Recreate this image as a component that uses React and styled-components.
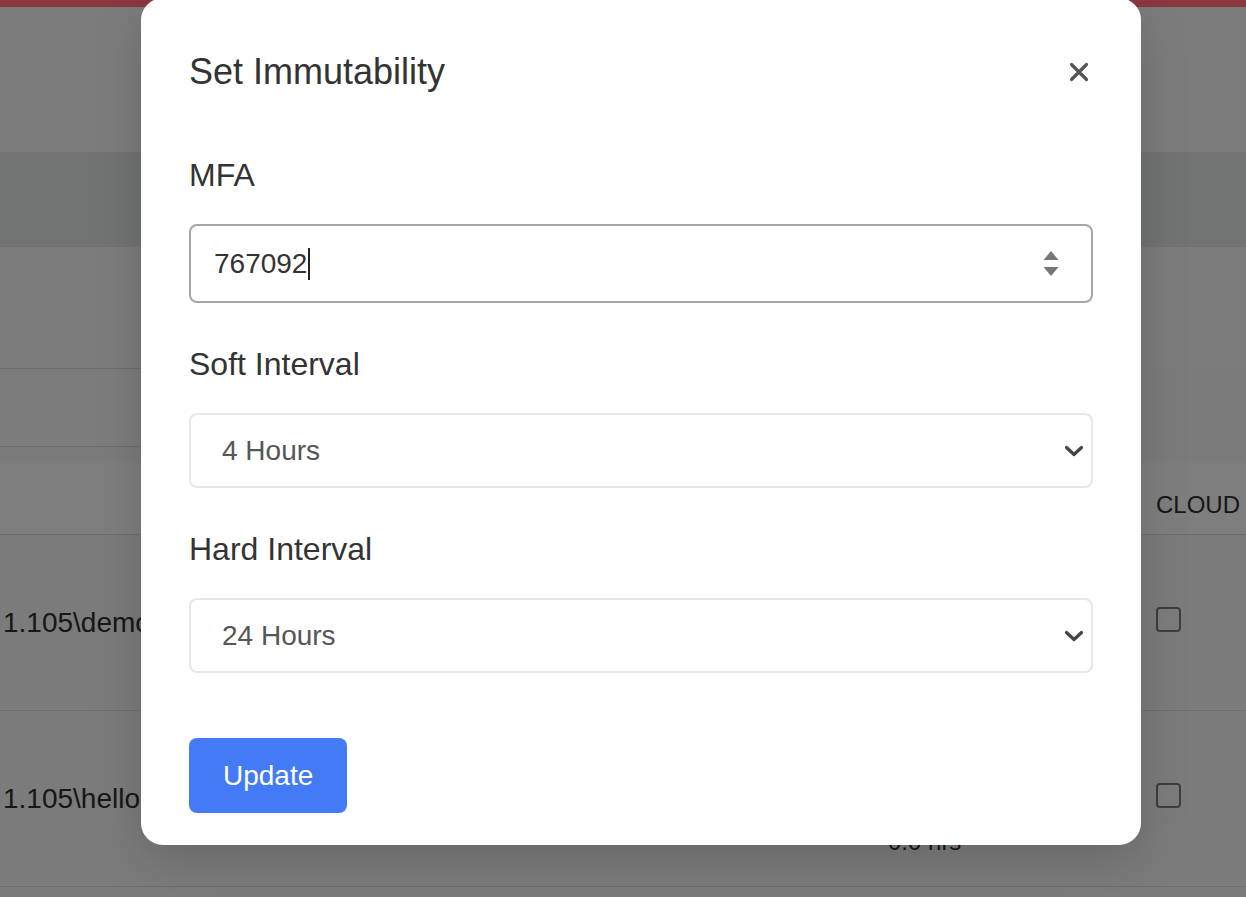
import React from "react";
import styled, { createGlobalStyle } from "styled-components";

const GlobalStyle = createGlobalStyle`
  html, body { margin: 0; padding: 0; }
  body {
    font-family: "Liberation Sans", Arial, sans-serif;
    overflow: hidden;
    background: #dfdfdf;
  }
  * { box-sizing: border-box; }
`;

const Page = styled.div`
  position: relative;
  width: 1246px;
  height: 897px;
  overflow: hidden;
  background: #e0e0e2;
  display: flex;
  flex-direction: column;
  color: #333;
`;

const TopBar = styled.div`
  height: 7px;
  flex: none;
  background: #fe6674;
`;

const Band = styled.div`
  flex: none;
  height: ${(p) => p.$h}px;
  background: ${(p) => p.$bg || "#e2e2e4"};
`;

const FilterRow = styled.div`
  flex: none;
  height: 79px;
  display: flex;
`;

const FilterBox = styled.div`
  width: 420px;
  margin-left: -2px;
  border: 1px solid #c6c6c6;
  border-radius: 0 4px 4px 0;
  background: #e2e2e4;
`;

const Table = styled.div`
  margin-top: 16px;
  display: grid;
  grid-template-columns: 888px 268px 1fr;
`;

const HeadCell = styled.div`
  height: 72px;
  background: #e6e6e6;
  border-bottom: 1px solid #c6c6c6;
  display: flex;
  align-items: center;
  padding-top: 12px;
  padding-left: ${(p) => p.$pl || 0}px;
  font-size: 24px;
  color: #2a2a2a;
  text-transform: uppercase;
`;

const Cell = styled.div`
  height: 176px;
  border-bottom: 1px solid #c6c6c6;
  display: flex;
  flex-direction: column;
  justify-content: ${(p) => (p.$end ? "flex-end" : "center")};
  padding-left: ${(p) => p.$pl || 0}px;
  padding-bottom: ${(p) => (p.$end ? 28 : 0)}px;
  font-size: ${(p) => p.$fs || 24}px;
  line-height: 32px;
  color: #2a2a2a;
  white-space: nowrap;
`;

const Checkbox = styled.span`
  display: block;
  width: 25px;
  height: 25px;
  margin-top: -6px;
  border: 2px solid #707070;
  border-radius: 4px;
  background: #e2e2e2;
`;

const Backdrop = styled.div`
  position: absolute;
  inset: 0;
  background: rgba(0, 0, 0, 0.45);
`;

const Modal = styled.div`
  position: absolute;
  left: 141px;
  top: -2px;
  width: 1000px;
  background: #fff;
  border-radius: 22px;
  padding: 52px 48px 32px;
  box-shadow: 0 14px 50px rgba(0, 0, 0, 0.16);
  display: flex;
  flex-direction: column;
  align-items: stretch;
`;

const Header = styled.div`
  display: flex;
  align-items: center;
  justify-content: space-between;
  height: 43px;
  margin-bottom: 63px;
`;

const Title = styled.h2`
  margin: 0;
  font-size: 36px;
  line-height: 43px;
  font-weight: 400;
  color: #333;
`;

const CloseButton = styled.button`
  border: 0;
  background: none;
  padding: 0;
  margin-right: 4px;
  width: 20px;
  height: 20px;
  display: flex;
  cursor: pointer;
`;

const Field = styled.div`
  display: flex;
  flex-direction: column;
  & + & {
    margin-top: 42px;
  }
`;

const Label = styled.label`
  font-size: 32px;
  line-height: 38px;
  color: #333;
  margin-bottom: 30px;
`;

const NumberField = styled.div`
  height: 79px;
  border: 2px solid #a6a6a6;
  border-radius: 8px;
  display: flex;
  align-items: center;
  padding: 0 32px 0 23px;
  font-size: 28px;
  color: #333;
`;

const Caret = styled.span`
  display: inline-block;
  width: 1.5px;
  height: 32px;
  margin-left: 1px;
  background: #222;
`;

const Spinner = styled.svg`
  margin-left: auto;
  flex: none;
`;

const SelectBox = styled.div`
  height: 75px;
  border: 2px solid #e7e7e7;
  border-radius: 8px;
  display: flex;
  align-items: center;
  padding: 0 7px 0 31px;
  font-size: 28px;
  color: #565656;
`;

const Chevron = styled.svg`
  margin-left: auto;
  flex: none;
`;

const UpdateButton = styled.button`
  align-self: flex-start;
  margin-top: 65px;
  height: 75px;
  padding: 0 34px;
  border: 0;
  border-radius: 8px;
  background: #437af5;
  color: #fff;
  font-family: "Liberation Sans", Arial, sans-serif;
  font-size: 28px;
  cursor: pointer;
`;

const Select = ({ value }) => (
  <SelectBox>
    <span>{value}</span>
    <Chevron width="20" height="12" viewBox="0 0 20 12">
      <polyline
        points="2.5,2.5 10,9.5 17.5,2.5"
        fill="none"
        stroke="#444"
        strokeWidth="3.2"
        strokeLinecap="round"
        strokeLinejoin="round"
      />
    </Chevron>
  </SelectBox>
);

export default function App() {
  return (
    <>
      <GlobalStyle />
      <Page>
        <TopBar />
        <Band $h={145} />
        <Band $h={95} $bg="#cfd2d2" />
        <Band $h={121} />
        <FilterRow>
          <FilterBox />
        </FilterRow>
        <Table>
          <HeadCell $pl={200}>Path</HeadCell>
          <HeadCell>Immutability</HeadCell>
          <HeadCell>Cloud</HeadCell>

          <Cell $pl={3} $fs={28}>1.105\demo</Cell>
          <Cell>
            <span>4.0 hrs</span>
            <span>24.0 hrs</span>
          </Cell>
          <Cell>
            <Checkbox />
          </Cell>

          <Cell $pl={3} $fs={28}>1.105\hello</Cell>
          <Cell $end>
            <span>4.0 hrs</span>
            <span>0.0 hrs</span>
          </Cell>
          <Cell>
            <Checkbox />
          </Cell>
        </Table>

        <Backdrop />

        <Modal role="dialog" aria-label="Set Immutability">
          <Header>
            <Title>Set Immutability</Title>
            <CloseButton aria-label="Close">
              <svg width="20" height="20" viewBox="0 0 20 20">
                <path
                  d="M2.5 2.5 L17.5 17.5 M17.5 2.5 L2.5 17.5"
                  stroke="#555"
                  strokeWidth="3.2"
                  strokeLinecap="round"
                />
              </svg>
            </CloseButton>
          </Header>

          <Field>
            <Label>MFA</Label>
            <NumberField>
              <span>767092</span>
              <Caret />
              <Spinner width="16" height="28" viewBox="0 0 16 28">
                <path d="M8 1 L15.5 10 L0.5 10 Z" fill="#777" />
                <path d="M0.5 17 L15.5 17 L8 26 Z" fill="#777" />
              </Spinner>
            </NumberField>
          </Field>

          <Field>
            <Label>Soft Interval</Label>
            <Select value="4 Hours" />
          </Field>

          <Field>
            <Label>Hard Interval</Label>
            <Select value="24 Hours" />
          </Field>

          <UpdateButton>Update</UpdateButton>
        </Modal>
      </Page>
    </>
  );
}
